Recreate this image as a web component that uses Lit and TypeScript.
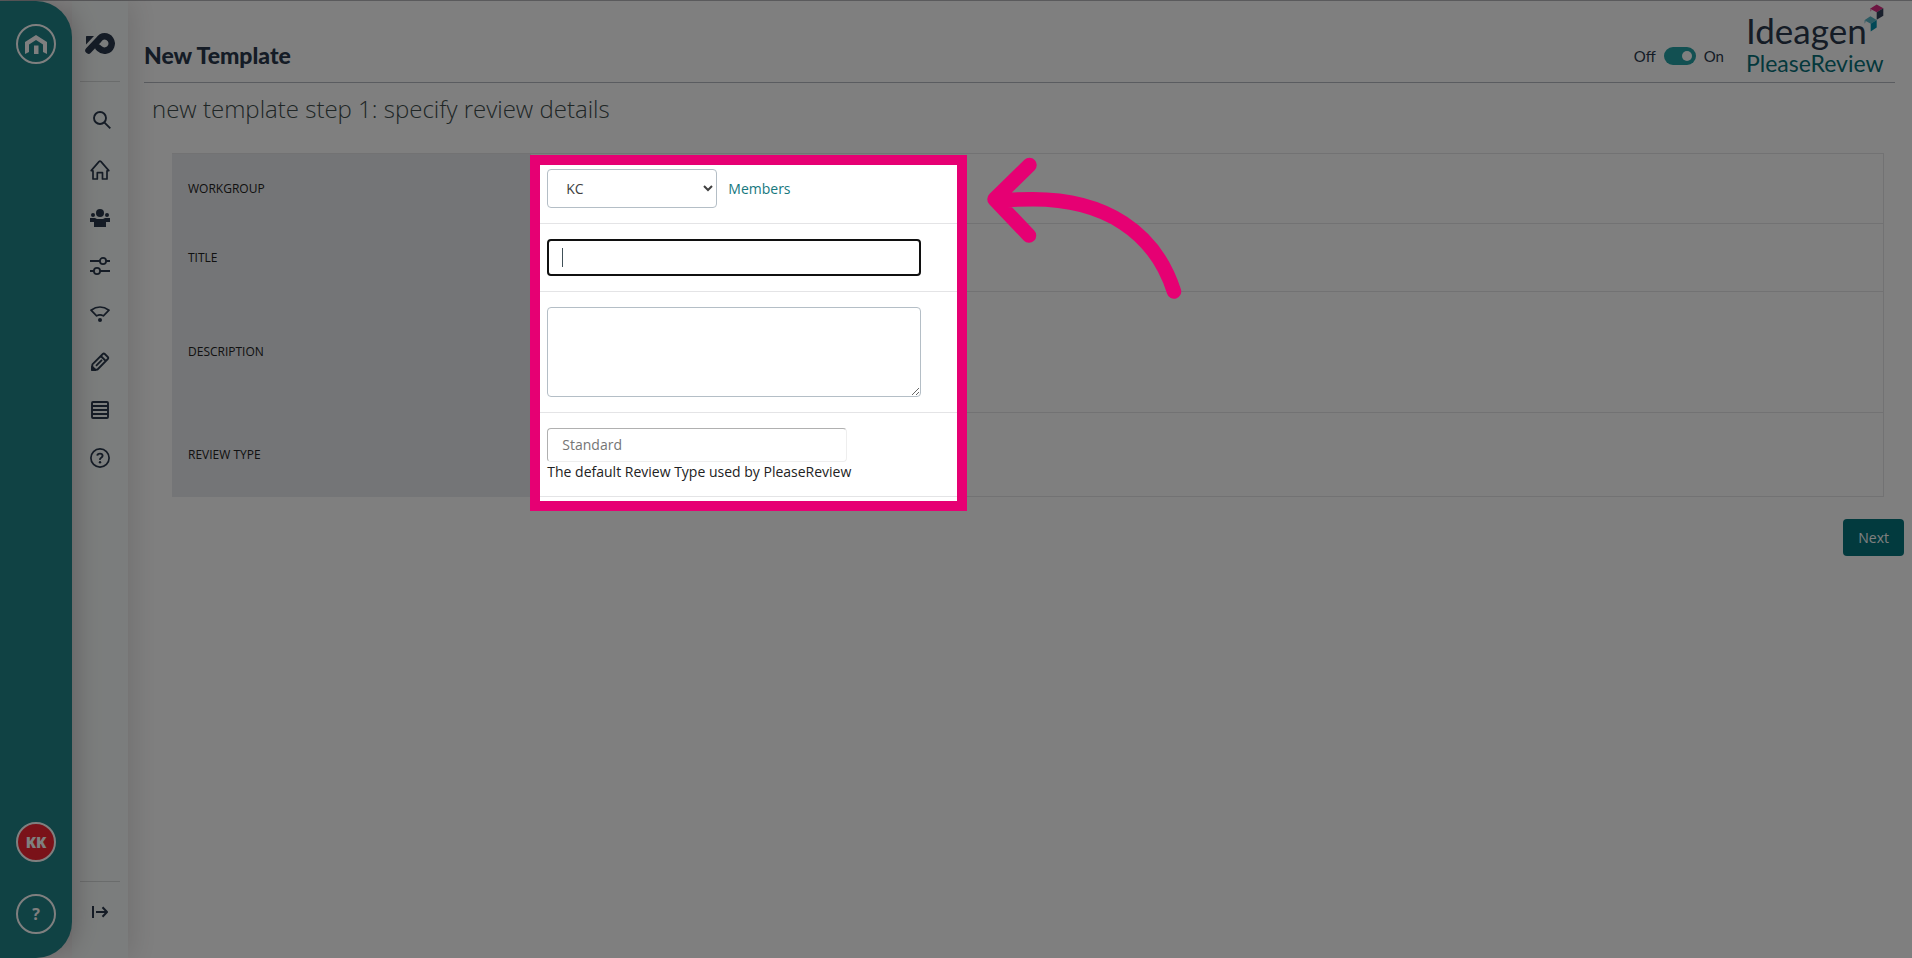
import { LitElement, html, css } from "lit";
import { customElement } from "lit/decorators.js";

const navIcons = [
  {
    label: "Home",
    icon: html`<svg viewBox="0 0 20 20" width="20" height="20" fill="none" stroke="currentColor" stroke-width="1.7" stroke-linejoin="round"><path d="M3 10.2V19h4.3v-6.3h5.2V19h4.5v-8.8M3 10.6H1.2L9 1.6q1-1 2 0l7.8 9H17"/></svg>`,
  },
  {
    label: "Workgroups",
    icon: html`<svg viewBox="0 0 20 20" width="20" height="20" fill="currentColor"><circle cx="10" cy="5" r="4"/><circle cx="3" cy="7" r="2"/><circle cx="17" cy="7" r="2"/><path d="M0 10h5l2 1h6l2-1h5v4h-4v5H4v-5H0z"/></svg>`,
  },
  {
    label: "Settings",
    icon: html`<svg viewBox="0 0 20 20" width="20" height="20" fill="none" stroke="currentColor" stroke-width="1.8"><circle cx="13" cy="5" r="3.1"/><circle cx="7" cy="15" r="3.1"/><path d="M0 5h10M16 5h4M0 15h4M10 15h10"/></svg>`,
  },
  {
    label: "Status",
    icon: html`<svg viewBox="0 0 20 20" width="20" height="20" fill="none" stroke="currentColor" stroke-width="1.7" stroke-linejoin="round"><path d="M1 6.2Q10-.2 19 6.2L13.4 11.9Q10 9.8 6.6 11.9Z"/><circle cx="10" cy="16" r="2" fill="currentColor" stroke="none"/></svg>`,
  },
  {
    label: "Edit",
    icon: html`<svg viewBox="0 0 20 20" width="20" height="20" fill="none" stroke="currentColor" stroke-width="1.8" stroke-linejoin="round"><path d="M2 18l.4-5.600L12.800 2q1-1 2 0l3 3q1 1 0 2L7.500 17.500zM10.800 4l5 5M6 13.800l6-6"/><path d="M2 18v-3.500l3.500 3.500z" fill="currentColor"/></svg>`,
  },
  {
    label: "Reports",
    icon: html`<svg viewBox="0 0 20 20" width="20" height="20" fill="none" stroke="currentColor" stroke-width="1.9"><rect x="2" y="2" width="16" height="16" rx="1"/><path d="M2 6h16M2 10h16M2 14h16"/></svg>`,
  },
  {
    label: "Help",
    icon: html`<svg viewBox="0 0 20 20" width="20" height="20" fill="none" stroke="currentColor" stroke-width="1.7"><circle cx="10" cy="10" r="9.100"/><path d="M7.300 7.600Q7.500 5.600 10 5.600T12.600 7.700Q12.600 8.900 11.200 9.700T10 11.800" stroke-width="1.900"/><circle cx="10" cy="14.200" r="1.200" fill="currentColor" stroke="none"/></svg>`,
  },
];

@customElement("app-rail")
class AppRail extends LitElement {
  static styles = css`
    :host {
      position: relative;
      z-index: 2;
      box-sizing: border-box;
      display: flex;
      flex-direction: column;
      flex: none;
      width: 72px;
      padding: 23px 16px 24px;
      gap: 32px;
      border-radius: 0 36px 36px 0;
      background: #208488;
      box-shadow: 4px 0 24px rgba(60, 30, 40, 0.25);
    }
    .round {
      box-sizing: border-box;
      display: grid;
      place-items: center;
      width: 40px;
      height: 40px;
      padding: 0;
      border: 2px solid #fff;
      border-radius: 50%;
      background: none;
      color: #fff;
      font: 700 16px/20px "Open Sans", sans-serif;
    }
    .user {
      margin-top: auto;
      background: #f52532;
      font-size: 15px;
      font-weight: 800;
    }
  `;
  render() {
    return html`
      <button class="round" aria-label="Launcher">
        <svg viewBox="0 0 22 19" width="22" height="19" fill="#fff"><path d="M0 19V7L11 0l11 7v12l-4-2V9.500L11 5 4 9.500V17z"/><path d="M9 19v-8.500h4.500V19z"/></svg>
      </button>
      <button class="round user">KK</button>
      <button class="round">?</button>
    `;
  }
}

@customElement("app-sidebar")
class AppSidebar extends LitElement {
  static styles = css`
    :host {
      position: relative;
      z-index: 1;
      box-sizing: border-box;
      display: flex;
      flex-direction: column;
      align-items: center;
      flex: none;
      width: 56px;
      background: #f7fbfa;
      box-shadow: 4px 0 28px rgba(60, 50, 50, 0.16);
      color: #2a384c;
    }
    .brand {
      display: grid;
      place-items: center;
      width: 40px;
      height: 81px;
      padding-top: 5px;
      box-sizing: border-box;
      border-bottom: 1px solid #d4d8d8;
    }
    .nav {
      display: flex;
      flex-direction: column;
      gap: 8px;
      padding-top: 18px;
    }
    .item {
      display: grid;
      place-items: center;
      width: 40px;
      height: 40px;
      padding: 0;
      border: 0;
      background: none;
      color: inherit;
    }
    .search {
      margin-bottom: 2px;
      padding-left: 4px;
    }
    .foot {
      margin-top: auto;
      padding: 10px 0 26px;
      border-top: 1px solid #d4d8d8;
    }
  `;
  render() {
    return html`
      <div class="brand">
        <svg viewBox="0 0 30 21" width="30" height="21"><path d="M1 3.500Q1 3 1.500 3H9L1 11.500z" fill="currentColor"/><path d="M3.500 17.500L13.500 7Q16 3.300 19.500 3.300a7.200 7.200 0 1 1-5 12.400l-1-1" fill="none" stroke="currentColor" stroke-width="6.500" stroke-linecap="round" stroke-linejoin="round"/></svg>
      </div>
      <nav class="nav">
        <button class="item search" aria-label="Search">
          <svg viewBox="0 0 18 18" width="18" height="18" fill="none" stroke="currentColor" stroke-width="1.900"><circle cx="7" cy="7" r="6"/><path d="M11.300 11.300l6 6"/></svg>
        </button>
        ${navIcons.map((n) => html`<button class="item" aria-label=${n.label}>${n.icon}</button>`)}
      </nav>
      <div class="foot">
        <button class="item" aria-label="Expand menu">
          <svg viewBox="0 0 16 12" width="16" height="12" fill="none" stroke="currentColor" stroke-width="2"><path d="M1 0v12M4 6h11M10.500 1.200L15 6l-4.500 4.800" stroke-linejoin="round"/></svg>
        </button>
      </div>
    `;
  }
}

@customElement("app-root")
class AppRoot extends LitElement {
  static styles = css`
    :host {
      box-sizing: border-box;
      display: flex;
      min-height: 100vh;
      overflow: hidden;
      padding-top: 1px;
      background: linear-gradient(#b4b4b8, #b4b4b8) top / 100% 1px no-repeat #fff;
      font: 14px/19px "Open Sans", sans-serif;
      color: #222;
    }
    .main {
      flex: 1;
      min-width: 0;
    }
    .header {
      display: flex;
      align-items: center;
      box-sizing: border-box;
      height: 82px;
      margin: 0 17px 0 16px;
      border-bottom: 1px solid #b4b8c0;
      font-family: Lato, sans-serif;
      color: #2a384c;
    }
    .title {
      flex: 1;
      margin: 26px 0 0;
      font-size: 23px;
      line-height: 28px;
      font-weight: 900;
    }
    .toggle {
      display: flex;
      align-items: center;
      gap: 8px;
      margin: 28px 22px 0 0;
      font-size: 15px;
      line-height: 20px;
    }
    .switch {
      appearance: none;
      display: flex;
      align-items: center;
      justify-content: flex-end;
      box-sizing: border-box;
      width: 32px;
      height: 18px;
      margin: 0;
      padding: 4px;
      border-radius: 9px;
      background: #24a0a4;
    }
    .switch::before {
      content: "";
      width: 10px;
      height: 10px;
      border-radius: 50%;
      background: #fff;
    }
    .logo {
      position: relative;
      display: flex;
      flex-direction: column;
      align-self: flex-start;
      width: 138px;
      margin-right: 11px;
      padding-top: 8px;
    }
    .company {
      font-size: 35px;
      line-height: 42px;
    }
    .product {
      font-size: 23px;
      line-height: 24px;
      color: #087078;
    }
    .cubes {
      position: absolute;
      right: 0;
      top: 3px;
    }
    .step {
      margin: 10px 24px 0;
      font-size: 24px;
      line-height: 32px;
      font-weight: 300;
      color: #404c4c;
    }
    .form {
      position: relative;
      margin: 28px 28px 22px 44px;
    }
    .table {
      width: 100%;
      border-spacing: 0;
      border: 1px solid #e4e4e6;
      border-width: 1px 1px 0 0;
    }
    .label {
      box-sizing: border-box;
      width: 21%;
      padding: 0 16px 2px;
      background: #e8eaee;
      font-size: 12px;
      font-weight: 400;
      text-align: left;
      text-transform: uppercase;
    }
    .value {
      padding: 15px 16px;
      border-bottom: 1px solid #e4e4e6;
    }
    .line {
      display: flex;
      align-items: center;
      gap: 11px;
    }
    .control {
      box-sizing: border-box;
      display: block;
      width: 374px;
      margin: 0;
      padding: 0 14px;
      border: 1px solid #b4bec6;
      border-radius: 4px;
      background: #fff;
      font: inherit;
      color: #404040;
    }
    .group {
      width: 170px;
      height: 39px;
    }
    .name {
      height: 37px;
      border: 2px solid #101010;
      outline: 0;
      background: linear-gradient(#405058, #405058) 13px center / 1px 19px no-repeat #fff;
    }
    .about {
      height: 90px;
    }
    .kind {
      width: 300px;
      height: 34px;
      padding-bottom: 2px;
      border-color: #b0b0b0 #eee #eee #b0b0b0;
      color: #757575;
    }
    .link {
      color: #16787e;
      text-decoration: none;
    }
    .note {
      margin: 0;
    }
    .actions {
      display: flex;
      justify-content: flex-end;
      padding-right: 8px;
    }
    .next {
      height: 37px;
      padding: 0 15px;
      border: 0;
      border-radius: 4px;
      background: #04747c;
      color: #fff;
      font: 500 14px/19px "Open Sans", sans-serif;
    }
    /* Tour spotlight: the spread shadow dims everything outside the frame. */
    .spotlight {
      position: absolute;
      z-index: 5;
      box-sizing: border-box;
      top: 2px;
      bottom: -14px;
      left: calc(21% - 2px);
      width: 437px;
      border: 10px solid #e60073;
      box-shadow: 0 0 0 4000px rgba(0, 0, 0, 0.5);
      pointer-events: none;
    }
    .arrow {
      position: absolute;
      left: 420px;
      top: -25px;
    }
  `;
  render() {
    return html`
      <app-rail></app-rail>
      <app-sidebar></app-sidebar>
      <main class="main">
        <header class="header">
          <h1 class="title">New Template</h1>
          <label class="toggle">Off <input class="switch" type="checkbox" role="switch" checked /> On</label>
          <div class="logo">
            <span class="company">Ideagen</span>
            <span class="product">PleaseReview</span>
            <svg class="cubes" viewBox="0 0 20 28" width="20" height="28">
              <path d="M12.700.500L19.300 4.300 12.700 8.300 6 4.700z" fill="#dc2c84"/>
              <path d="M19.300 4.300v7.400l-6.600 4V8.300z" fill="#34405a"/>
              <path d="M6 4.700v3l2-1.800z" fill="#e8a0c4"/>
              <path d="M6.400 12.300l6.300 3.700-6 3.700L.400 16.300z" fill="#58b4c4"/>
              <path d="M12.700 16v7.600l-6 3.900v-7.800z" fill="#0090ac"/>
              <path d="M.400 16.300v3.400l1.800-2.200z" fill="#9cd0dc"/>
            </svg>
          </div>
        </header>
        <h2 class="step">new template step 1: specify review details</h2>
        <div class="form">
          <table class="table">
            <tr>
              <th class="label" scope="row"><label for="group">Workgroup</label></th>
              <td class="value">
                <div class="line">
                  <select class="control group" id="group"><option>KC</option></select>
                  <a class="link" href="#members">Members</a>
                </div>
              </td>
            </tr>
            <tr>
              <th class="label" scope="row"><label for="name">Title</label></th>
              <td class="value"><input class="control name" id="name" type="text" /></td>
            </tr>
            <tr>
              <th class="label" scope="row"><label for="about">Description</label></th>
              <td class="value"><textarea class="control about" id="about"></textarea></td>
            </tr>
            <tr>
              <th class="label" scope="row"><label for="kind">Review Type</label></th>
              <td class="value">
                <input class="control kind" id="kind" type="text" value="Standard" readonly />
                <p class="note">The default Review Type used by PleaseReview</p>
              </td>
            </tr>
          </table>
          <div class="spotlight">
            <svg class="arrow" viewBox="0 0 260 180" width="260" height="180" fill="none" stroke="#e60073" stroke-width="14.500" stroke-linecap="round" stroke-linejoin="round">
              <path d="M69.500 25L34.500 59.300 69 95.500M36 60.500Q54 59.300 73 59.300C145 59.300 195 92 214 151.500"/>
            </svg>
          </div>
        </div>
        <div class="actions"><button class="next">Next</button></div>
      </main>
    `;
  }
}
